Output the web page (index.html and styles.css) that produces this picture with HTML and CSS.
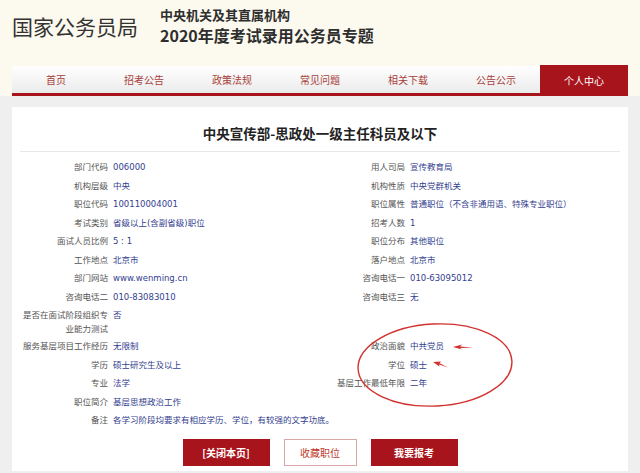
FILE: index.html
```html
<!DOCTYPE html>
<html lang="zh-CN">
<head>
<meta charset="utf-8">
<title>国家公务员局</title>
<link rel="stylesheet" href="styles.css">
</head>
<body>
<div class="top">
  <header class="head">
    <div class="logo">国家公务员局</div>
    <div class="sub">
      <div class="sub1">中央机关及其直属机构</div>
      <div class="sub2">2020年度考试录用公务员专题</div>
    </div>
  </header>
  <nav class="nav">
    <a>首页</a>
    <a>招考公告</a>
    <a>政策法规</a>
    <a>常见问题</a>
    <a>相关下载</a>
    <a>公告公示</a>
    <a class="active">个人中心</a>
  </nav>
</div>
<main class="card">
  <h1 class="title">中央宣传部-思政处一级主任科员及以下</h1>
  <div class="info">
    <div class="lbl">部门代码</div><div class="val">006000</div>
    <div class="lbl">用人司局</div><div class="val">宣传教育局</div>

    <div class="lbl">机构层级</div><div class="val">中央</div>
    <div class="lbl">机构性质</div><div class="val">中央党群机关</div>

    <div class="lbl">职位代码</div><div class="val">100110004001</div>
    <div class="lbl">职位属性</div><div class="val">普通职位（不含非通用语、特殊专业职位）</div>

    <div class="lbl">考试类别</div><div class="val">省级以上(含副省级)职位</div>
    <div class="lbl">招考人数</div><div class="val">1</div>

    <div class="lbl">面试人员比例</div><div class="val">5 : 1</div>
    <div class="lbl">职位分布</div><div class="val">其他职位</div>

    <div class="lbl">工作地点</div><div class="val">北京市</div>
    <div class="lbl">落户地点</div><div class="val">北京市</div>

    <div class="lbl">部门网站</div><div class="val">www.wenming.cn</div>
    <div class="lbl">咨询电话一</div><div class="val">010-63095012</div>

    <div class="lbl">咨询电话二</div><div class="val">010-83083010</div>
    <div class="lbl">咨询电话三</div><div class="val">无</div>

    <div class="lbl wrap">是否在面试阶段组织专业能力测试</div><div class="val">否</div>
    <div class="lbl"></div><div class="val"></div>

    <div class="lbl">服务基层项目工作经历</div><div class="val">无限制</div>
    <div class="lbl">政治面貌</div><div class="val">中共党员</div>

    <div class="lbl">学历</div><div class="val">硕士研究生及以上</div>
    <div class="lbl">学位</div><div class="val">硕士</div>

    <div class="lbl">专业</div><div class="val">法学</div>
    <div class="lbl">基层工作最低年限</div><div class="val">二年</div>

    <div class="lbl">职位简介</div><div class="val span">基层思想政治工作</div>

    <div class="lbl">备注</div><div class="val span">各学习阶段均要求有相应学历、学位，有较强的文字功底。</div>
  </div>
  <div class="btns">
    <a class="btn">[关闭本页]</a>
    <a class="btn ghost">收藏职位</a>
    <a class="btn">我要报考</a>
  </div>
  <svg class="mark" width="180" height="100" viewBox="0 0 180 100">
    <ellipse cx="83" cy="48" rx="77" ry="41" transform="rotate(-3 83 48)" fill="none" stroke="#d2312d" stroke-width="1.4"/>
    <path d="M101 30 L110 27.6 L108 29.6 L121 30.4 L108 31 L110 32.6 Z" fill="#d2312d"/>
    <path d="M81 45 L89 44.6 L87.6 46.2 L96 50.6 L87 47.6 L87.4 49.4 Z" fill="#d2312d"/>
  </svg>
</main>
</body>
</html>
```
FILE: styles.css
```css
html, body {
  margin: 0;
  padding: 0;
}
body {
  background: #efefef;
  font-family: "Noto Sans CJK SC", sans-serif;
  color: #333;
}
.top {
  background: #fcf9ee;
  padding: 0 12px;
}
.head {
  height: 60px;
  display: flex;
  align-items: flex-start;
}
.logo {
  width: 148px;
  padding-top: 11px;
  font-size: 21px;
  line-height: 30px;
  color: #333;
}
.sub {
  padding-top: 6px;
  color: #2e2e2e;
}
.sub1 {
  font-size: 13px;
  line-height: 18px;
  font-weight: bold;
}
.sub2 {
  font-size: 16px;
  line-height: 22px;
  font-weight: bold;
}
.nav {
  display: flex;
  height: 27px;
  margin-top: 6px;
  border-bottom: 3px solid #a8141c;
  background: linear-gradient(#ffffff, #ebebeb);
}
.nav a {
  flex: 1;
  text-align: center;
  font-size: 10px;
  line-height: 27px;
  color: #a8403a;
}
.nav a.active {
  background: #a8141c;
  color: #fff;
  height: 31px;
  margin-top: -1px;
  line-height: 31px;
}
.card {
  position: relative;
  background: #fff;
  margin: 11px 12px 0;
  padding: 16px 8px 5px;
}
.title {
  margin: 0;
  font-size: 13.5px;
  line-height: 20px;
  font-weight: bold;
  text-align: center;
  color: #222;
  padding-bottom: 8px;
  border-bottom: 1px solid #e8e8e8;
}
.info {
  display: grid;
  grid-template-columns: 88px 197px 90px 1fr;
  column-gap: 5px;
  margin-top: 6px;
  font-family: "DejaVu Sans", "Noto Sans CJK SC", sans-serif;
  font-size: 8.5px;
  line-height: 18.5px;
}
.lbl {
  text-align: right;
  color: #555;
  white-space: normal;
}
.lbl.wrap {
  line-height: 14px;
  padding: 2px 0 1px;
}
.val {
  color: #33408e;
  white-space: nowrap;
}
.val.span {
  grid-column: 2 / -1;
}
.btns {
  display: flex;
  justify-content: center;
  gap: 14px;
  margin-top: 9px;
}
.btn {
  box-sizing: border-box;
  width: 87px;
  height: 27px;
  line-height: 27px;
  text-align: center;
  font-size: 10px;
  font-weight: bold;
  color: #fff;
  background: #a8141c;
}
.btn.ghost {
  width: 73px;
  background: #fff;
  border: 1px solid #dba6a6;
  line-height: 25px;
  font-weight: normal;
  color: #c0392b;
}
.mark {
  position: absolute;
  left: 340px;
  top: 210px;
}
```
